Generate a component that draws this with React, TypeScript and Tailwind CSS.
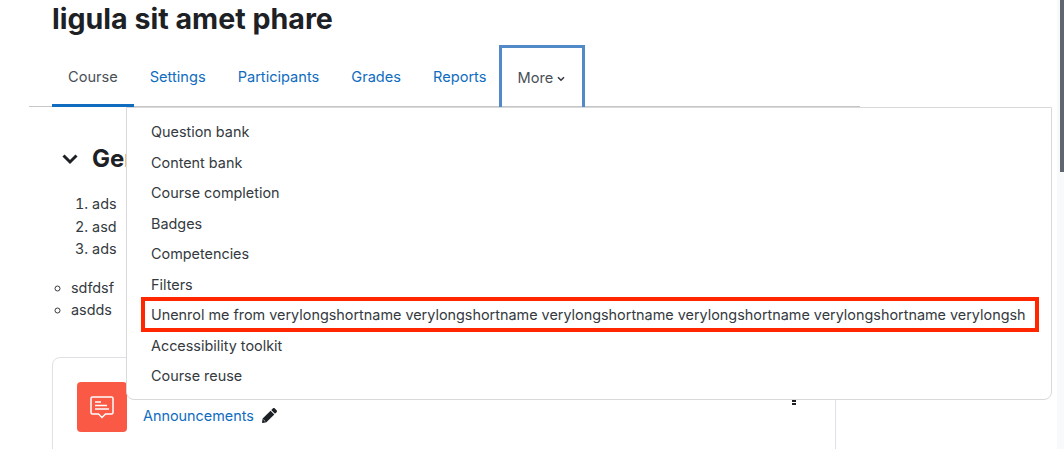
import React from 'react';

const tabs = ['Settings', 'Participants', 'Grades', 'Reports'];
const menuItems = [
    'Question bank',
    'Content bank',
    'Course completion',
    'Badges',
    'Competencies',
    'Filters',
    'Unenrol me from verylongshortname verylongshortname verylongshortname verylongshortname verylongshortname verylongsh',
    'Accessibility toolkit',
    'Course reuse',
];

export default function App() {
    return (
        <div className="flex h-[449px] w-[1064px] overflow-hidden bg-white text-[14.4px] text-[#1d2125] font-['Inter',sans-serif]">
            <div className="relative flex-1 min-w-0">
                <h1 className="pl-[52px] pt-[2px] h-[45px] text-[28.6px] leading-[34px] font-bold whitespace-nowrap">
                    ligula sit amet phare
                </h1>

                <div className="ml-[29px] w-[831px] h-[62px] border-b border-[#c4c6c8]">
                    <nav className="flex h-[62px] pl-[23px] items-stretch text-[14.6px]">
                        <a className="flex items-center px-4 h-[62px] text-[#495057] border-b-[3px] border-[#0f6cbf] pt-[6px]">Course</a>
                        {tabs.map((tab) => (
                            <a key={tab} className="flex items-center px-4 h-[62px] pt-[3px] text-[#0f6cbf]">{tab}</a>
                        ))}
                        <a className="flex items-center gap-[4px] -ml-[3px] w-[86px] pl-[15px] pt-[2px] h-[62px] text-[#495057] border-[3px] border-b-0 border-[#5289c7]">
                            More
                            <svg width="8" height="6" viewBox="0 0 8 6" fill="none" stroke="#343a40" strokeWidth="1.6">
                                <path d="M1 1.2l3 3 3-3" />
                            </svg>
                        </a>
                    </nav>
                </div>

                <div className="pl-[52px]">
                    <div className="flex items-center pl-[10px] pt-[33px] h-[71px]">
                        <svg width="16" height="12" viewBox="0 0 16 12" fill="none" stroke="#1d2125" strokeWidth="3">
                            <path d="M1.500 2.500L8 9l6.500-6.500" />
                        </svg>
                        <h3 className="ml-[14px] text-[24px] leading-[30px] font-bold">General</h3>
                    </div>
                    <ol className="mt-[15px] pl-[23px] list-decimal list-inside leading-[22.5px] text-[#343a40]">
                        <li>ads</li>
                        <li>asd</li>
                        <li>ads</li>
                    </ol>
                    <ul className="mt-[16px] pl-[19px] leading-[22.5px] list-[circle] text-[#343a40]">
                        <li>sdfdsf</li>
                        <li>asdds</li>
                    </ul>
                    <div className="mt-[35px] flex w-[784px] h-[120px] rounded-t-lg border border-[#dee2e6] pl-[24px] pt-[24px] pr-[39px]">
                        <div className="flex items-center justify-center w-[50px] h-[50px] rounded-[4px] bg-[#fa5a45]">
                            <svg width="26" height="26" viewBox="0 0 26 26" fill="none" stroke="white" strokeWidth="1.5">
                                <path d="M3.500 3h19a1.500 1.500 0 0 1 1.500 1.500v14a1.500 1.500 0 0 1-1.500 1.500h-6L13 23.500 9.500 20h-6A1.500 1.500 0 0 1 2 18.500v-14A1.500 1.500 0 0 1 3.500 3z" />
                                <path d="M6 8h6M6 11.500h12M6 15h14" />
                            </svg>
                        </div>
                        <div className="ml-4 mt-[23px] flex items-start h-[24px] text-[#0f6cbf]">
                            <span>Announcements</span>
                            <svg className="ml-[8px] mt-[3px]" width="15" height="15" viewBox="0 0 512 512" fill="#1d2125">
                                <path d="M497.900 142.100l-46.100 46.100c-4.700 4.700-12.300 4.700-17 0l-111-111c-4.700-4.700-4.700-12.300 0-17l46.100-46.100c18.700-18.700 49.100-18.700 67.900 0l60.100 60.100c18.800 18.700 18.800 49.100 0 67.900zM284.200 99.800L21.600 362.400.400 483.900c-2.900 16.400 11.400 30.600 27.800 27.800l121.500-21.300 262.600-262.600c4.700-4.700 4.700-12.300 0-17l-111-111c-4.800-4.700-12.400-4.700-17.100 0z" />
                                <path d="M50 400l60 60" stroke="white" strokeWidth="22" fill="none" />
                            </svg>
                        </div>
                        <div className="ml-auto mt-[14px] flex flex-col gap-[1px]">
                            <span className="w-[4px] h-[2.500px] bg-[#1d2125]" />
                            <span className="w-[4px] h-[2.500px] bg-[#1d2125]" />
                            <span className="w-[4px] h-[2.500px] bg-[#1d2125]" />
                        </div>
                    </div>
                </div>

                <div className="absolute left-[126px] top-[107px] w-[926px] h-[293px] py-[9px] bg-white border border-[#d8d9da] rounded-b-lg">
                    {menuItems.map((item, i) => (
                        <div key={item} className="relative flex items-center h-[30.500px] px-[24px] whitespace-nowrap text-[#343a40]">
                            {item}
                            {i === 6 && (
                                <span className="absolute left-[14px] top-[-3px] w-[898px] h-[35px] border-[4px] border-[#ff2600]" />
                            )}
                        </div>
                    ))}
                </div>
            </div>

            <div className="w-[7px] h-full pl-[3px] bg-[#f8f9fa]">
                <div className="w-[4px] h-[172px] bg-[#5f6670]" />
            </div>
        </div>
    );
}
